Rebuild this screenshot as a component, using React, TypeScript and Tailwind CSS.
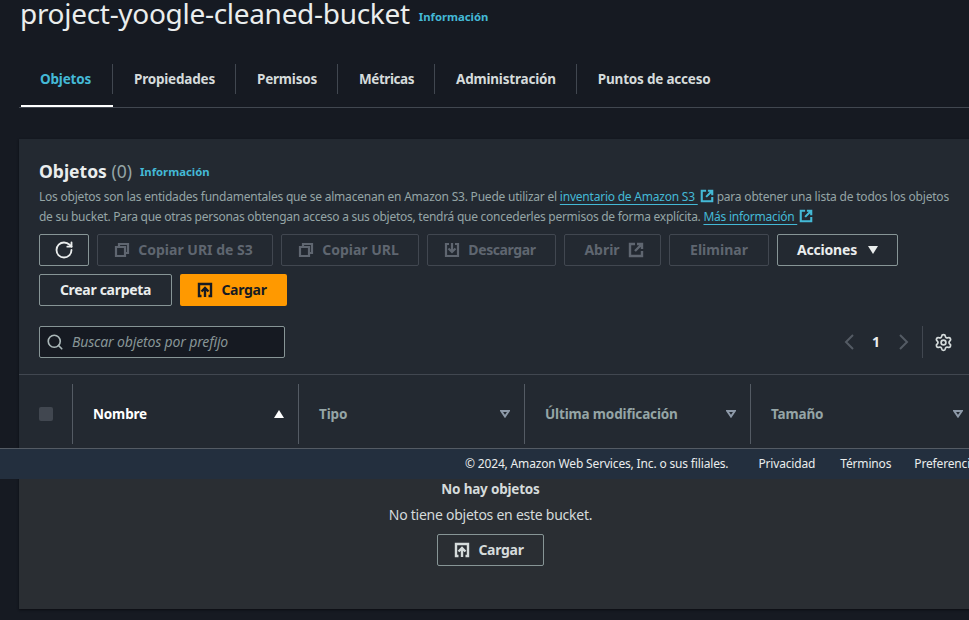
import { RotateCw, Search, Settings } from 'lucide-react'

function CopyIcon() {
  return (
    <svg viewBox="0 0 16 16" className="w-4 h-4 shrink-0" fill="none" stroke="currentColor" strokeWidth="2.2">
      <path d="M2 5h9v9H2z" />
      <path d="M5 5V2h9v9h-3" />
    </svg>
  )
}

function DownloadIcon() {
  return (
    <svg viewBox="0 0 16 16" className="w-4 h-4 shrink-0" fill="none" stroke="currentColor" strokeWidth="2.2">
      <path d="M5 2H2v12h12V2h-3" />
      <path d="M8 1v8M4.5 6.5 8 10l3.5-3.5" />
    </svg>
  )
}

function ExternalIcon({ className = 'w-4 h-4' }: { className?: string }) {
  return (
    <svg viewBox="0 0 16 16" className={`${className} shrink-0`} fill="none" stroke="currentColor" strokeWidth="2.4">
      <path d="M7 2H2v12h12V9" />
      <path d="M9 2h5v5M14 2 7 9" />
    </svg>
  )
}

function UploadIcon() {
  return (
    <svg viewBox="0 0 16 16" className="w-4 h-4 shrink-0" fill="none" stroke="currentColor" strokeWidth="2.4">
      <path d="M4.5 14H2V2h12v12h-2.5" />
      <path d="M8 15V7M4.5 9.5 8 6l3.5 3.5" />
    </svg>
  )
}

function SortDown() {
  return (
    <svg viewBox="0 0 10 8" className="w-[10px] h-2 shrink-0 text-[#8d99a8]" fill="none" stroke="currentColor" strokeWidth="2">
      <path d="M1.2 1h7.6L5 6.5z" />
    </svg>
  )
}

const tabs = ['Objetos', 'Propiedades', 'Permisos', 'Métricas', 'Administración', 'Puntos de acceso']

function DisabledButton({ width, children }: { width: string; children: React.ReactNode }) {
  return (
    <button className={`${width} h-8 flex items-center justify-center gap-2 rounded-[2px] border border-[#414750] text-[#5f6670] text-sm font-bold`}>
      {children}
    </button>
  )
}

export default function App() {
  const linkText = 'underline underline-offset-[3px] [text-decoration-skip-ink:none]'
  return (
    <div className="relative w-[969px] h-[620px] overflow-hidden bg-[#161a22] font-['Noto_Sans',sans-serif] text-[#d5dbdb]">
      <div className="pl-5 h-[26px] flex items-center gap-[9px]">
        <h1 className="text-[28px] leading-none tracking-[-0.3px] font-normal text-[#eaeded] whitespace-nowrap">project-yoogle-cleaned-bucket</h1>
        <span className="text-[11.3px] font-bold text-[#44b9d6] mt-[9px]">Información</span>
      </div>

      <div className="ml-[19px] mt-[38px] h-[44px] border-b border-[#414750] flex">
        {tabs.map((t, i) => (
          <div key={t} className="relative h-[42px] flex">
            <div className={`h-[30px] flex items-center pl-[21px] text-[13.5px] font-bold whitespace-nowrap ${i === 0 ? 'pr-[21px]' : 'pr-5'} ${i === 3 ? 'tracking-[-0.45px]' : 'tracking-[-0.2px]'} ${i === 0 ? 'text-[#44b9d6]' : ''} ${i < 5 ? 'border-r border-[#414750]' : ''}`}>
              {t}
            </div>
            {i === 0 && <div className="absolute left-[2px] right-0 top-[41px] h-[2px] bg-white" />}
          </div>
        ))}
      </div>

      <section className="ml-[19px] mt-[31px] w-[1000px] h-[470px] bg-[#232931] shadow-[0_1px_2px_#0b0d12]">
        <div className="pl-5 pt-5">
          <div className="flex items-center h-6 gap-2">
            <h2 className="text-[17.5px] font-bold text-[#eaeded]">
              Objetos <span className="font-normal text-[#95a5a6]">(0)</span>
            </h2>
            <span className="text-[11.3px] font-bold text-[#44b9d6] mt-[3px]">Información</span>
          </div>
          <p className="w-[925px] mt-1 text-xs tracking-[-0.22px] leading-5 text-[#95a5a6]">
            Los objetos son las entidades fundamentales que se almacenan en Amazon S3. Puede utilizar el{' '}
            <a className="text-[#44b9d6]">
              <span className={linkText}>inventario de Amazon S3 </span>
              <ExternalIcon className="inline w-[14px] h-[14px] ml-[2px] align-[-2px]" />
            </a>{' '}
            <span className="tracking-[-0.2px]">para obtener una lista de todos los objetos</span>
            <br />
            <span className="tracking-[-0.26px]">
              de su bucket. Para que otras personas obtengan acceso a sus objetos, tendrá que concederles permisos de forma explícita.{' '}
              <a className="text-[#44b9d6]">
                <span className={linkText}>Más información </span>
                <ExternalIcon className="inline w-[14px] h-[14px] ml-[2px] align-[-2px]" />
              </a>
            </span>
          </p>

          <div className="flex gap-2 mt-[7px]">
            <button className="w-[50px] h-8 flex items-center justify-center rounded-[2px] border border-[#879596]">
              <RotateCw className="w-5 h-5 text-[#eaeded]" strokeWidth={2.2} />
            </button>
            <DisabledButton width="w-[176px] pr-[3px]"><CopyIcon /> Copiar URI de S3</DisabledButton>
            <DisabledButton width="w-[138px] pr-[3px]"><CopyIcon /> Copiar URL</DisabledButton>
            <DisabledButton width="w-[129px] pr-[3px]"><DownloadIcon /> <span className="tracking-[-0.4px]">Descargar</span></DisabledButton>
            <DisabledButton width="w-[97px] pl-[3px]">Abrir <ExternalIcon /></DisabledButton>
            <DisabledButton width="w-[100px]">Eliminar</DisabledButton>
            <button className="w-[121px] h-8 flex items-center justify-center gap-[11px] rounded-[2px] border border-[#879596] text-sm tracking-[-0.2px] font-bold text-[#eaeded]">
              Acciones
              <svg viewBox="0 0 10 8" className="w-[10px] h-2"><path d="M0 0h10L5 8z" fill="#eaeded" /></svg>
            </button>
          </div>
          <div className="flex gap-2 mt-2">
            <button className="w-[133px] h-8 rounded-[2px] border border-[#879596] text-sm tracking-[-0.3px] font-bold text-[#eaeded]">Crear carpeta</button>
            <button className="w-[107px] h-8 pr-[3px] flex items-center justify-center gap-2 rounded-[2px] bg-[#ff9900] text-sm tracking-[-0.3px] font-bold text-[#161a22]">
              <UploadIcon /> Cargar
            </button>
          </div>

          <div className="flex items-center mt-5 h-8">
            <div className="w-[246px] h-8 flex items-center gap-2 pl-[6px] rounded-[2px] border border-[#879596] bg-[#161a22]">
              <Search className="w-[18px] h-[18px] text-[#aab7b8]" strokeWidth={2.2} />
              <span className="italic text-sm tracking-[-0.15px] text-[#879596]">Buscar objetos por prefijo</span>
            </div>
          </div>
        </div>

        <div className="flex items-center h-8 w-[934px] -mt-8 justify-end">
          <svg viewBox="0 0 10 16" className="w-[10px] h-4" fill="none" stroke="#545b64" strokeWidth="2"><path d="M9 1 2 8l7 7" /></svg>
          <span className="w-[34px] ml-[5px] text-center text-sm font-bold text-[#eaeded]">1</span>
          <svg viewBox="0 0 10 16" className="w-[10px] h-4 ml-[6px]" fill="none" stroke="#545b64" strokeWidth="2"><path d="m1 1 7 7-7 7" /></svg>
          <div className="w-px h-8 bg-[#414750] ml-[13px]" />
          <Settings className="w-[19px] h-[19px] ml-[11px] text-[#d5dbdb]" strokeWidth={2.2} />
        </div>

        <div className="mt-4 border-t border-[#414750] h-[74px] pt-[9px] flex items-start text-[13.5px] tracking-[-0.15px] font-bold text-[#95a5a6]">
          <div className="w-[54px] h-[60px] pl-5 flex items-center border-r border-[#545b64]">
            <div className="w-[14px] h-[14px] rounded-[2px] bg-[#414750]" />
          </div>
          <div className="w-[226px] h-[60px] pl-5 pr-[14px] flex items-center justify-between border-r border-[#545b64] text-white">
            Nombre
            <svg viewBox="0 0 10 8" className="w-[10px] h-2"><path d="M0 8h10L5 0z" fill="#fff" /></svg>
          </div>
          <div className="w-[226px] h-[60px] pl-5 pr-[14px] flex items-center justify-between border-r border-[#545b64]">
            Tipo <SortDown />
          </div>
          <div className="w-[226px] h-[60px] pl-5 pr-[14px] flex items-center justify-between border-r border-[#545b64]">
            Última modificación <SortDown />
          </div>
          <div className="w-[212px] h-[60px] pl-5 flex items-center justify-between">
            Tamaño <SortDown />
          </div>
        </div>

        <div className="h-[161px] bg-[#2a2e33]">
          <div className="w-[943px] flex flex-col items-center pt-[31px]">
            <div className="text-[13.5px] tracking-[-0.2px] font-bold leading-5">No hay objetos</div>
            <div className="text-sm tracking-[-0.25px] leading-5 mt-[6px]">No tiene objetos en este bucket.</div>
            <button className="w-[107px] h-8 mt-[9px] pr-[3px] flex items-center justify-center gap-2 rounded-[2px] border border-[#879596] text-sm tracking-[-0.3px] font-bold">
              <UploadIcon /> Cargar
            </button>
          </div>
        </div>
      </section>

      <footer className="absolute left-0 right-0 top-[448px] h-[31px] border-t border-[#545b64] bg-[#232f3e] flex items-center text-xs tracking-[-0.16px] text-[#eaeded] whitespace-nowrap pl-[465px]">
        <span>© 2024, Amazon Web Services, Inc. o sus filiales.</span>
        <span className="ml-[30px]">Privacidad</span>
        <span className="ml-[25px]">Términos</span>
        <span className="ml-[23px]">Preferencias de cookies</span>
      </footer>
    </div>
  )
}
